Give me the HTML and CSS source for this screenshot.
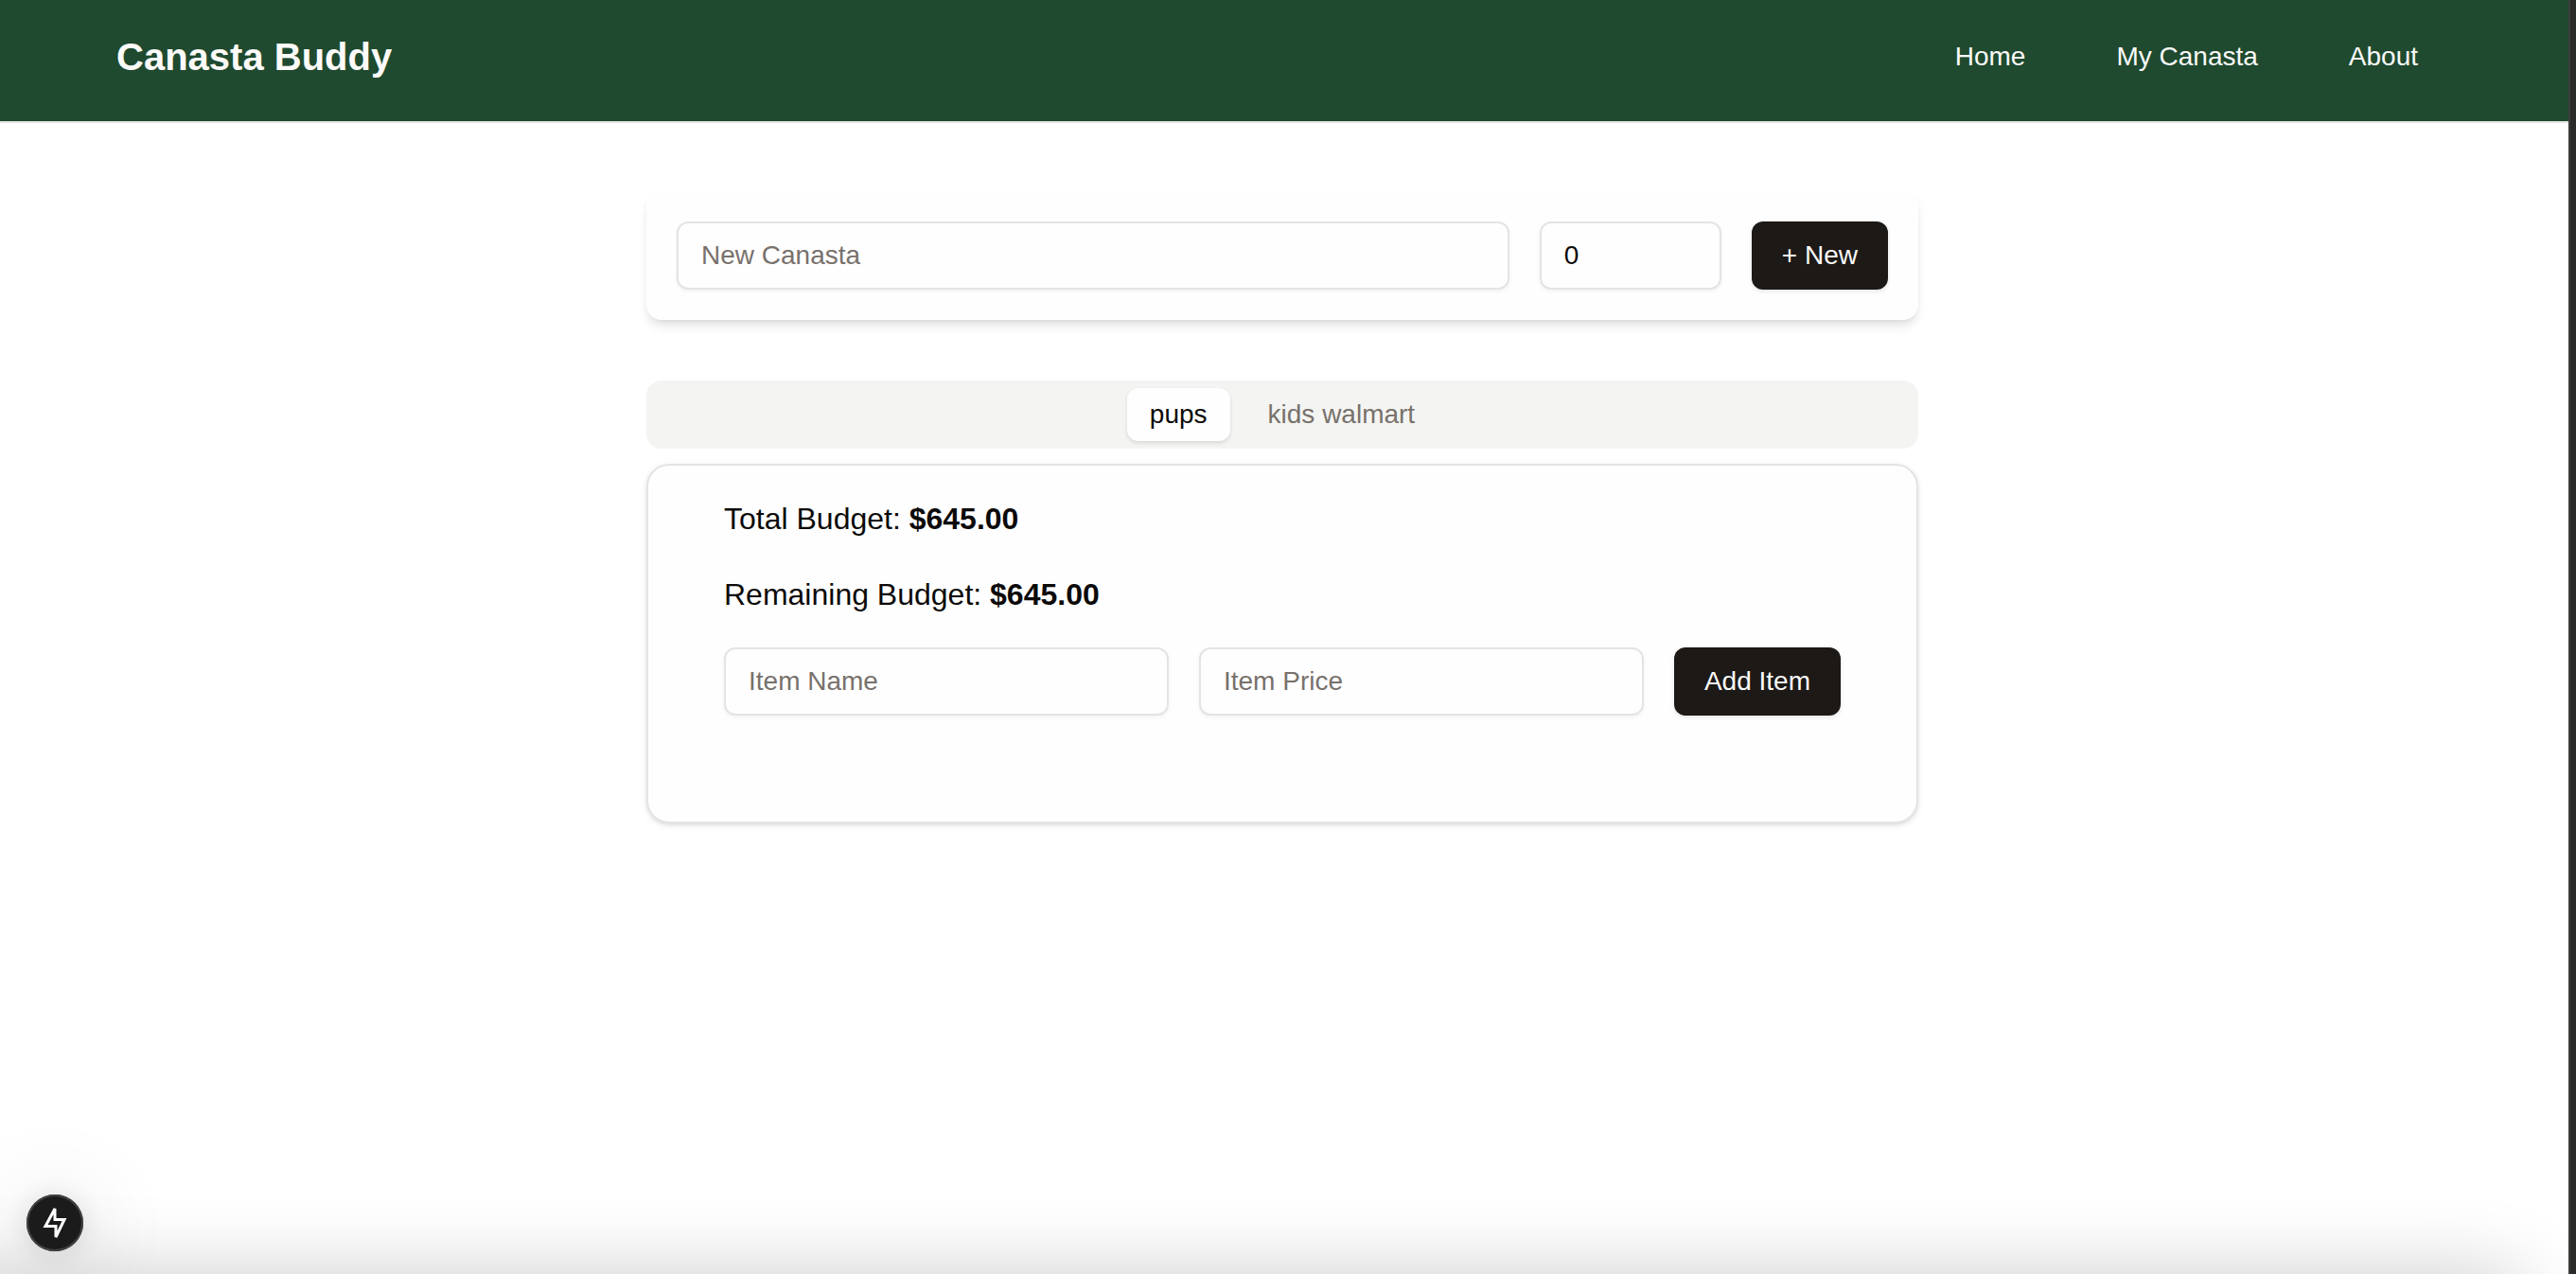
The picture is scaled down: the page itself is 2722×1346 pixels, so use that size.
FILE: index.html
```html
<!DOCTYPE html>
<html lang="en">
<head>
<meta charset="utf-8">
<meta name="viewport" content="width=device-width, initial-scale=1">
<title>Canasta Buddy</title>
<link rel="stylesheet" href="styles.css">
</head>
<body>
<div class="page">
  <header class="site-header">
    <h1 class="brand">Canasta Buddy</h1>
    <nav class="nav" aria-label="Main">
      <a href="#">Home</a>
      <a href="#">My Canasta</a>
      <a href="#">About</a>
    </nav>
  </header>
  <main class="main">
    <form class="new-canasta">
      <input class="field field-grow" type="text" placeholder="New Canasta" aria-label="New Canasta">
      <input class="field field-amount" type="text" inputmode="numeric" value="0" aria-label="Budget">
      <button class="button" type="button">+ New</button>
    </form>
    <div class="tabs" role="tablist">
      <button class="tab tab-active" type="button" role="tab" aria-selected="true">pups</button>
      <button class="tab" type="button" role="tab" aria-selected="false">kids walmart</button>
    </div>
    <section class="canasta" role="tabpanel">
      <p class="budget">Total Budget: <strong>$645.00</strong></p>
      <p class="budget">Remaining Budget: <strong>$645.00</strong></p>
      <form class="new-item">
        <input class="field field-grow" type="text" placeholder="Item Name" aria-label="Item Name">
        <input class="field field-grow" type="text" placeholder="Item Price" aria-label="Item Price">
        <button class="button" type="button">Add Item</button>
      </form>
    </section>
  </main>
</div>
<div class="window-edge"></div>
<div class="bottom-shade"></div>
<button class="dev-badge" type="button" aria-label="Static route">
  <svg viewBox="0 0 60 60" aria-hidden="true"><path d="M30 15V26.500H40L31 45V33.500H20Z"/></svg>
</button>
</body>
</html>
```
FILE: styles.css
```css
* {
  box-sizing: border-box;
}

body {
  margin: 0;
  min-height: 100vh;
  display: flex;
  overflow: hidden;
  background: #fff;
  color: #0c0a09;
  font: 28px/40px "Liberation Sans", Arial, sans-serif;
}

.page {
  flex: 1;
  min-width: 0;
}

.window-edge {
  flex: none;
  width: 8px;
  border-left: 2px solid #3d3d3d;
  background: #2b2b2a;
}

.site-header {
  display: flex;
  align-items: flex-start;
  justify-content: space-between;
  height: 130px;
  padding: 32px 159px 0 123px;
  border-bottom: 2px solid #e7e5e4;
  background: #1f4a2f;
  background-clip: padding-box;
}

.brand {
  margin: 0;
  color: #fdfaf9;
  font-size: 40px;
  line-height: 56px;
}

.nav {
  display: flex;
  gap: 96px;
  padding-top: 8px;
}

.nav a {
  color: #fafaf9;
  text-decoration: none;
}

.main {
  width: 1348px;
  max-width: 100%;
  margin: 0 auto;
  padding: 72px 4px 0 0;
}

.new-canasta,
.new-item {
  display: flex;
  gap: 32px;
}

.new-canasta {
  padding: 32px;
  border-radius: 16px;
  background: #fefefe;
  box-shadow: 0 8px 12px -2px rgba(0, 0, 0, 0.1), 0 4px 8px -4px rgba(0, 0, 0, 0.1);
}

.field {
  height: 72px;
  min-width: 0;
  padding: 0 24px;
  border: 2px solid #e4e4e4;
  border-radius: 12px;
  background: #fefefe;
  color: #0c0a09;
  font: inherit;
  box-shadow: 0 2px 4px rgba(0, 0, 0, 0.05);
}

.field::placeholder {
  color: #78716c;
  opacity: 1;
}

.field-grow {
  flex: 1;
}

.field-amount {
  width: 192px;
}

.button {
  flex: none;
  height: 72px;
  padding: 0 32px;
  border: 0;
  border-radius: 12px;
  background: #1c1917;
  color: #fafaf9;
  font: inherit;
  box-shadow: 0 2px 4px rgba(0, 0, 0, 0.1);
}

.tabs {
  display: flex;
  justify-content: center;
  gap: 16px;
  margin-top: 64px;
  padding: 8px;
  border-radius: 16px;
  background: #f4f4f2;
}

.tab {
  height: 56px;
  padding: 0 24px;
  border: 0;
  border-radius: 12px;
  background: none;
  color: #78716c;
  font: inherit;
}

.tab-active {
  background: #fefefe;
  color: #0c0a09;
  box-shadow: 0 2px 4px rgba(0, 0, 0, 0.12);
}

.canasta {
  display: flex;
  flex-direction: column;
  gap: 32px;
  margin-top: 16px;
  padding: 32px 80px 112px;
  border: 2px solid #e4e4e4;
  border-radius: 24px;
  background: #fefefe;
  box-shadow: 0 2px 6px rgba(0, 0, 0, 0.1), 0 2px 4px -2px rgba(0, 0, 0, 0.1);
}

.budget {
  margin: 0;
  font-size: 32px;
  line-height: 48px;
}

/* soft shadow rising from below the window */
.bottom-shade {
  position: fixed;
  top: 100%;
  left: -100px;
  right: 60px;
  height: 200px;
  box-shadow: 0 0 84px rgba(0, 0, 0, 0.2);
  pointer-events: none;
}

.dev-badge {
  position: fixed;
  left: 28px;
  bottom: 24px;
  width: 60px;
  height: 60px;
  padding: 0;
  border: 0;
  border-radius: 50%;
  background: #1b1b1c;
  box-shadow: inset 0 0 0 2px #414142, 0 2px 32px rgba(0, 0, 0, 0.12), 0 8px 100px rgba(0, 0, 0, 0.2);
}

.dev-badge svg {
  display: block;
  fill: none;
  stroke: #fff;
  stroke-width: 3;
}
```
